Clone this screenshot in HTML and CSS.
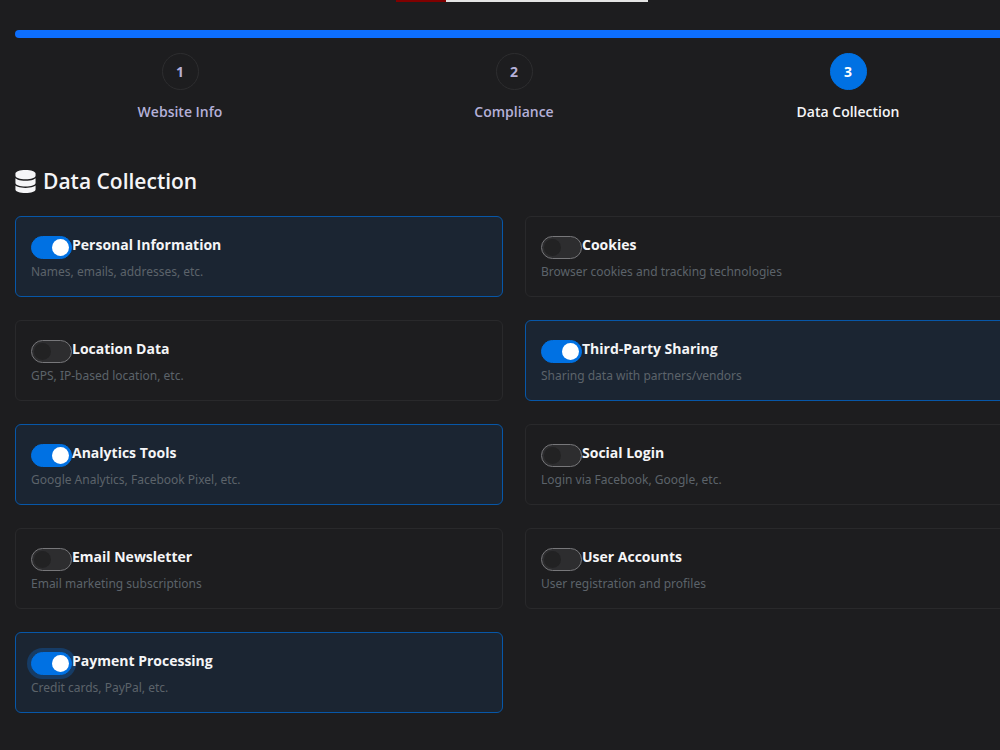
FILE: index.html
```html
<!DOCTYPE html>
<html lang="en">
  <head>
    <meta charset="UTF-8" />
    <meta name="viewport" content="width=device-width, initial-scale=1.0" />
    <title>Data Collection</title>
    <!-- Stylesheet -->
    <link rel="stylesheet" href="styles.css" />
  </head>
  <body>
    <div class="top-strip"></div>
    <main class="wizard">
      <div class="progress"></div>
      <ol class="steps">
        <li class="step">
          <span class="step-number">1</span>
          <span class="step-label">Website Info</span>
        </li>
        <li class="step">
          <span class="step-number">2</span>
          <span class="step-label">Compliance</span>
        </li>
        <li class="step active">
          <span class="step-number">3</span>
          <span class="step-label">Data Collection</span>
        </li>
      </ol>

      <h2 class="section-title">
        <svg class="icon" viewBox="0 0 448 512" aria-hidden="true">
          <path d="M448 80v48c0 44.200-100.300 80-224 80S0 172.200 0 128V80C0 35.800 100.300 0 224 0s224 35.800 224 80zM393.200 214.700c20.800-7.400 39.900-16.900 54.800-28.600V288c0 44.200-100.300 80-224 80S0 332.200 0 288V186.100c14.900 11.800 34 21.200 54.800 28.600C99.700 230.700 159.500 240 224 240s124.300-9.300 169.200-25.300zM0 346.100c14.900 11.800 34 21.200 54.800 28.600C99.700 390.700 159.500 400 224 400s124.300-9.300 169.200-25.300c20.800-7.400 39.900-16.900 54.800-28.600V432c0 44.200-100.300 80-224 80S0 476.200 0 432v-85.900z" />
        </svg>
        Data Collection
      </h2>

      <form class="options">
        <div class="card selected">
          <div class="switch-row">
            <input type="checkbox" class="switch" id="personal" checked />
            <label for="personal">Personal Information</label>
          </div>
          <p>Names, emails, addresses, etc.</p>
        </div>
        <div class="card">
          <div class="switch-row">
            <input type="checkbox" class="switch" id="cookies" />
            <label for="cookies">Cookies</label>
          </div>
          <p>Browser cookies and tracking technologies</p>
        </div>
        <div class="card">
          <div class="switch-row">
            <input type="checkbox" class="switch" id="location" />
            <label for="location">Location Data</label>
          </div>
          <p>GPS, IP-based location, etc.</p>
        </div>
        <div class="card selected">
          <div class="switch-row">
            <input type="checkbox" class="switch" id="sharing" checked />
            <label for="sharing">Third-Party Sharing</label>
          </div>
          <p>Sharing data with partners/vendors</p>
        </div>
        <div class="card selected">
          <div class="switch-row">
            <input type="checkbox" class="switch" id="analytics" checked />
            <label for="analytics">Analytics Tools</label>
          </div>
          <p>Google Analytics, Facebook Pixel, etc.</p>
        </div>
        <div class="card">
          <div class="switch-row">
            <input type="checkbox" class="switch" id="social" />
            <label for="social">Social Login</label>
          </div>
          <p>Login via Facebook, Google, etc.</p>
        </div>
        <div class="card">
          <div class="switch-row">
            <input type="checkbox" class="switch" id="newsletter" />
            <label for="newsletter">Email Newsletter</label>
          </div>
          <p>Email marketing subscriptions</p>
        </div>
        <div class="card">
          <div class="switch-row">
            <input type="checkbox" class="switch" id="accounts" />
            <label for="accounts">User Accounts</label>
          </div>
          <p>User registration and profiles</p>
        </div>
        <div class="card selected">
          <div class="switch-row">
            <input type="checkbox" class="switch focused" id="payment" checked />
            <label for="payment">Payment Processing</label>
          </div>
          <p>Credit cards, PayPal, etc.</p>
        </div>
      </form>
    </main>
  </body>
</html>
```

FILE: styles.css
```css
* {
  padding: 0;
  margin: 0;
  box-sizing: border-box;
}
body {
  background-color: #1d1d1f;
  color: #f5f5f7;
  font-family: "Open Sans", "Noto Sans", sans-serif;
  overflow: hidden;
}
.top-strip {
  width: 252px;
  height: 2px;
  margin: 0 auto;
  transform: translateX(22px);
  background: linear-gradient(to right, #800000 50px, #e4e4e4 50px);
}
/* the row gutter runs past the right edge of the window */
.wizard {
  margin: 28px -13px 0 15px;
}
.progress {
  height: 8px;
  border-radius: 4px;
  background-color: #0d6efd;
}
.steps {
  display: flex;
  list-style: none;
  margin: 15px -2px 0;
}
.step {
  flex: 1;
  display: flex;
  flex-direction: column;
  align-items: center;
  gap: 11px;
  color: #b4b0d8;
  font-weight: 600;
}
.step-number {
  width: 37px;
  height: 37px;
  display: grid;
  place-items: center;
  border: 1px solid #2d2d2f;
  border-radius: 50%;
  font-size: 14px;
  font-weight: 700;
}
.step-label {
  font-size: 14px;
  line-height: 22px;
}
.active {
  color: #f5f5f7;
}
.active .step-number {
  background-color: #0071e3;
  border-color: #0071e3;
  color: #ffffff;
}
.section-title {
  display: flex;
  align-items: center;
  gap: 7px;
  margin: 43px 0 20px;
  font-size: 21px;
  line-height: 30px;
  font-weight: 600;
}
.icon {
  width: 21px;
  height: 23px;
  fill: currentColor;
}
.options {
  display: grid;
  grid-template-columns: 1fr 1fr;
  gap: 23px 22px;
}
.card {
  padding: 15px 15px 13px;
  border: 1px solid #29292b;
  border-radius: 6px;
}
.card.selected {
  background-color: #1b2532;
  border-color: #0757a8;
}
.switch-row {
  display: flex;
  height: 28px;
}
.switch {
  appearance: none;
  display: flex;
  align-items: center;
  width: 41px;
  height: 23px;
  margin-top: 4px;
  padding: 0 2px;
  border: 1px solid #77777a;
  border-radius: 12px;
  background-color: #2d2d2f;
}
.switch::before {
  content: "";
  width: 17px;
  height: 17px;
  border-radius: 50%;
  background-color: #222223;
}
.switch:checked {
  justify-content: flex-end;
  background-color: #0071e3;
  border-color: #0071e3;
}
.switch:checked::before {
  background-color: #ffffff;
}
.switch.focused {
  box-shadow: 0 0 0 4px #163c66;
}
.card label {
  font-size: 14px;
  line-height: 25px;
  font-weight: 700;
}
.card p {
  color: #5c636a;
  font-family: "Noto Sans", "Open Sans", sans-serif;
  font-size: 12px;
  line-height: 23px;
}
```
